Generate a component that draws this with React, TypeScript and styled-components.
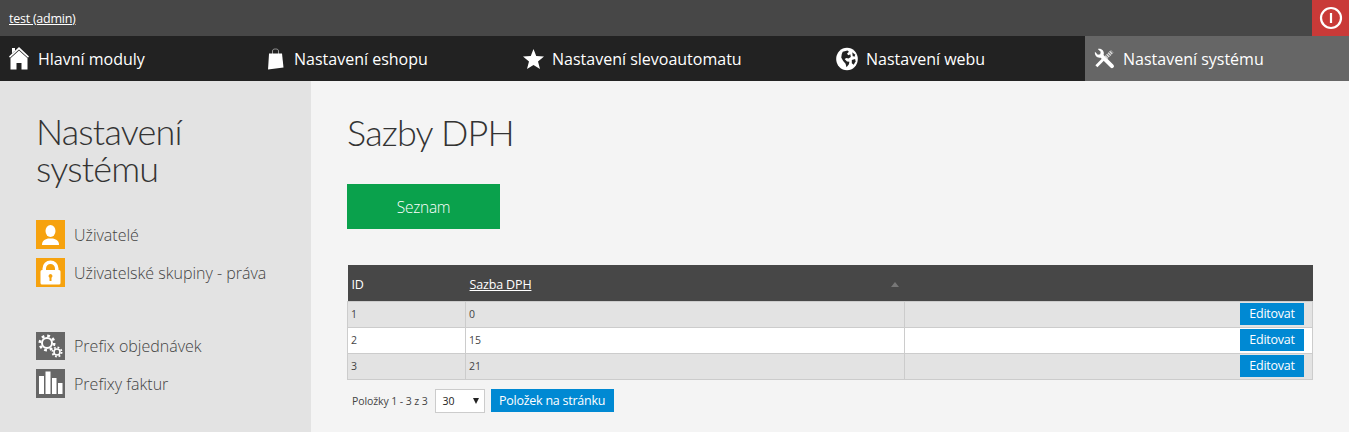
import styled, { createGlobalStyle } from 'styled-components';

const GlobalStyle = createGlobalStyle`
  html, body {
    margin: 0;
    padding: 0;
    background: #f4f4f4;
    font-family: "Open Sans", "Noto Sans", sans-serif;
    color: #444;
    overflow: hidden;
  }
  * { box-sizing: border-box; }
`;

const Page = styled.div`
  width: 1349px;
  height: 432px;
  display: flex;
  flex-direction: column;
`;

const TopBar = styled.header`
  height: 36px;
  flex-shrink: 0;
  background: #474747;
  display: flex;
  align-items: center;
  justify-content: space-between;
  padding-left: 9px;
`;

const UserLink = styled.a`
  color: #fff;
  font-size: 12.5px;
  letter-spacing: -0.25px;
  text-decoration: underline;
`;

const Logout = styled.a`
  width: 37px;
  height: 36px;
  background: #c93a38;
  display: flex;
  align-items: center;
  justify-content: center;
`;

const Nav = styled.nav`
  height: 45px;
  flex-shrink: 0;
  background: #222;
  display: grid;
  grid-template-columns: 258px 256px 313px 258px 264px;
`;

const NavItem = styled.a<{ $active?: boolean }>`
  display: flex;
  align-items: center;
  gap: 8px;
  padding-left: 9px;
  color: #fff;
  font-size: 16px;
  background: ${(p) => (p.$active ? '#666' : 'transparent')};
`;

const NavIcon = styled.span<{ $width?: number }>`
  width: ${(p) => p.$width ?? 21}px;
  height: 24px;
  display: flex;
  align-items: center;
`;

const Body = styled.div`
  flex: 1;
  min-height: 0;
  display: flex;
`;

const Sidebar = styled.aside`
  width: 311px;
  background: #e3e3e3;
  padding: 32px 0 0 36px;
`;

const SideTitle = styled.h2`
  margin: 0 0 33px;
  font-family: Lato, "Open Sans", sans-serif;
  font-size: 36px;
  line-height: 37px;
  font-weight: 300;
  letter-spacing: -0.8px;
  color: #333;
`;

const SideGroup = styled.div`
  display: flex;
  flex-direction: column;
  gap: 9px;
  margin-bottom: 45px;
`;

const SideLink = styled.a<{ $short?: boolean }>`
  display: flex;
  align-items: center;
  gap: 9px;
  height: ${(p) => (p.$short ? 28 : 29)}px;
  font-size: 16px;
  font-weight: 300;
  color: #444;
`;

const SideIcon = styled.span<{ $color: string }>`
  width: 29px;
  height: 100%;
  background: ${(p) => p.$color};
  display: flex;
`;

const Main = styled.main`
  flex: 1;
  padding: 27px 36px 0;
`;

const Title = styled.h1`
  margin: 0 0 27px;
  font-family: Lato, "Open Sans", sans-serif;
  font-size: 36px;
  line-height: 49px;
  font-weight: 300;
  letter-spacing: -0.8px;
  color: #333;
`;

const GreenButton = styled.a`
  width: 153px;
  height: 45px;
  background: #0aa14c;
  color: #fff;
  font-size: 15.5px;
  font-weight: 300;
  letter-spacing: -0.3px;
  display: flex;
  align-items: center;
  justify-content: center;
  margin-bottom: 36px;
`;

const Table = styled.table`
  width: 966px;
  border-collapse: collapse;
  table-layout: fixed;
  font-size: 10.5px;
`;

const HeadRow = styled.tr`
  height: 36px;
  background: #474747;
  color: #fff;
`;

const Th = styled.th<{ $width?: number }>`
  position: relative;
  width: ${(p) => (p.$width ? `${p.$width}px` : 'auto')};
  padding: 3px 4px 0;
  text-align: left;
  font-weight: 400;
  font-size: 12.5px;
  letter-spacing: -0.15px;
`;

const SortLink = styled.a`
  color: #fff;
  text-decoration: underline;
`;

const SortArrow = styled.span`
  position: absolute;
  right: 6px;
  top: 17px;
  border-left: 4px solid transparent;
  border-right: 4px solid transparent;
  border-bottom: 5px solid #777;
`;

const Row = styled.tr<{ $odd: boolean }>`
  height: 26px;
  background: ${(p) => (p.$odd ? '#e3e3e3' : '#fff')};
`;

const Td = styled.td<{ $right?: boolean }>`
  border: 1px solid #ccc;
  padding: 0 8px 0 3px;
  color: #444;
  text-align: ${(p) => (p.$right ? 'right' : 'left')};
  line-height: 0;
  & > span { line-height: 14px; }
`;

const BlueButton = styled.a`
  display: inline-flex;
  align-items: center;
  justify-content: center;
  height: 22px;
  padding-top: 1px;
  background: #0089d3;
  color: #fff;
  font-size: 12.5px;
  letter-spacing: -0.25px;
  line-height: 1;
`;

const EditButton = styled(BlueButton)`
  width: 64px;
  vertical-align: middle;
`;

const Pager = styled.div`
  display: flex;
  align-items: center;
  margin-top: 9px;
  padding-left: 5px;
  font-size: 10.5px;
  color: #444;
  letter-spacing: -0.1px;
`;

const PageSelect = styled.div`
  width: 50px;
  height: 24px;
  margin-left: 7px;
  padding: 0 5px 0 7px;
  background: #fff;
  border: 1px solid #ccc;
  display: flex;
  align-items: center;
  justify-content: space-between;
  font-size: 10.5px;
  color: #222;
`;

const SelectArrow = styled.span`
  border-left: 3.5px solid transparent;
  border-right: 3.5px solid transparent;
  border-top: 6px solid #222;
`;

const PerPageButton = styled(BlueButton)`
  width: 123px;
  height: 23px;
  margin-left: 6px;
`;

const HomeIcon = () => (
  <svg width="20" height="23" viewBox="0 0 20 23" fill="#fff">
    <path d="M0 9.500L10 0l10 9.500-1 1.200L10 2.600 1 10.700z" />
    <path d="M3 1h3v2.500l-3 3z" />
    <path d="M1.500 11.200L10 3.500l8.500 7.700V22.500h-6v-6.500h-5v6.500h-6z" />
  </svg>
);

const BagIcon = () => (
  <svg width="17" height="22" viewBox="0 0 17 22" fill="none">
    <path d="M5.500 6V3C5.500 1.500 6.500 1 8.500 1s3 .5 3 2V6" stroke="#999" strokeWidth="1" />
    <path d="M2 5.500h13l1.500 14L1 21.500z" fill="#fff" />
  </svg>
);

const StarIcon = () => (
  <svg width="21" height="20" viewBox="0 0 20 19">
    <path
      fill="#fff"
      d="M10 0l2.600 6.700 7.400.5-5.700 4.600 1.900 7.200L10 15.100 3.800 19l1.900-7.200L0 7.200l7.400-.5z"
    />
  </svg>
);

const GlobeIcon = () => (
  <svg width="23" height="24" viewBox="0 0 23 24">
    <ellipse cx="11.500" cy="12" rx="11.300" ry="11.800" fill="#fff" />
    <path
      fill="#222"
      d="M7 4.500l5-1.500 1.500 1.500-2 2 1.500 1.500 2-1 .5 3-2.500 1.500-2-.5-2 1 2.500 2.500 2.500.5-.5 2.500-2.500 3-1-3.500-2.500-3-2-3.500.5-3.500z"
    />
    <path fill="#222" d="M16.500 13l3.500-1 .5 2.500-2 3.500-2-1.500z" />
    <path fill="#222" d="M17 5l2.500 2 .5 2.500-2.500-.5z" />
  </svg>
);

const PowerIcon = () => (
  <svg width="24" height="24" viewBox="0 0 24 24" fill="none" stroke="#fff" strokeWidth="2.2">
    <circle cx="12" cy="12" r="10" />
    <path d="M12 7v10" />
  </svg>
);

const ToolsIcon = () => (
  <svg width="22" height="22" viewBox="0 0 22 22" fill="none">
    <path
      fill="#fff"
      d="M1 3.500l3 3 2.500-.5.5-2.500-3-3c3-.8 6.300 1.200 6.300 4.500 0 .6-.1 1.200-.3 1.700l10.300 10.300a2.100 2.100 0 0 1-3 3L6.900 9.600C3.700 10.500.2 7.500 1 3.500z"
    />
    <path stroke="#ddd" strokeWidth="4" strokeDasharray="1.500 .7" d="M12.500 9.500L19 3" />
    <path stroke="#fff" strokeWidth="3" d="M9.500 11.500L2.500 18.500" />
  </svg>
);

const UserIcon = () => (
  <svg width="29" height="29" viewBox="0 0 29 29" fill="#fff">
    <ellipse cx="14.500" cy="11" rx="5" ry="6" />
    <path d="M6 25c0-4 2-5.500 6-6.500h5c4 1 6 2.500 6 6.500z" />
  </svg>
);

const LockIcon = () => (
  <svg width="29" height="29" viewBox="0 0 29 29" fill="#fff">
    <path d="M14.500 2.500a8 8 0 0 0-8 8V12h3.500v-1.500a4.500 4.500 0 0 1 9 0V12H22.500v-1.500a8 8 0 0 0-8-8z" />
    <path
      fillRule="evenodd"
      d="M6 12h17a1.500 1.500 0 0 1 1.500 1.500V25a1.500 1.500 0 0 1-1.500 1.500H6A1.500 1.500 0 0 1 4.500 25V13.500A1.500 1.500 0 0 1 6 12zM14.500 16a2 2 0 0 0-1 3.700V23h2v-3.300a2 2 0 0 0-1-3.700z"
    />
  </svg>
);

const CogsIcon = () => (
  <svg width="29" height="28" viewBox="0 0 29 28" fill="none" stroke="#fff">
    <circle cx="11" cy="11" r="5" strokeWidth="2" />
    <circle cx="11" cy="11" r="7.200" strokeWidth="2.600" strokeDasharray="2.800 2.850" />
    <circle cx="21" cy="20" r="3" strokeWidth="1.600" />
    <circle cx="21" cy="20" r="4.600" strokeWidth="1.800" strokeDasharray="1.800 1.810" />
  </svg>
);

const BarsIcon = () => (
  <svg width="29" height="29" viewBox="0 0 29 29" fill="#fff">
    <path d="M3 7h5v18H3zM9.500 2.500h5V25h-5zM16 9h4.500v16H16zM22 14h4.500v11H22z" />
  </svg>
);

const rows = [
  { id: 1, rate: 0 },
  { id: 2, rate: 15 },
  { id: 3, rate: 21 },
];

export default function App() {
  return (
    <Page>
      <GlobalStyle />
      <TopBar>
        <UserLink>test (admin)</UserLink>
        <Logout>
          <PowerIcon />
        </Logout>
      </TopBar>
      <Nav>
        <NavItem>
          <NavIcon><HomeIcon /></NavIcon>
          Hlavní moduly
        </NavItem>
        <NavItem>
          <NavIcon $width={19}><BagIcon /></NavIcon>
          Nastavení eshopu
        </NavItem>
        <NavItem>
          <NavIcon><StarIcon /></NavIcon>
          Nastavení slevoautomatu
        </NavItem>
        <NavItem>
          <NavIcon $width={22}><GlobeIcon /></NavIcon>
          Nastavení webu
        </NavItem>
        <NavItem $active>
          <NavIcon><ToolsIcon /></NavIcon>
          Nastavení systému
        </NavItem>
      </Nav>
      <Body>
        <Sidebar>
          <SideTitle>
            Nastavení
            <br />
            systému
          </SideTitle>
          <SideGroup>
            <SideLink>
              <SideIcon $color="#f6a20e"><UserIcon /></SideIcon>
              Uživatelé
            </SideLink>
            <SideLink>
              <SideIcon $color="#f6a20e"><LockIcon /></SideIcon>
              Uživatelské skupiny - práva
            </SideLink>
          </SideGroup>
          <SideGroup>
            <SideLink $short>
              <SideIcon $color="#666"><CogsIcon /></SideIcon>
              Prefix objednávek
            </SideLink>
            <SideLink>
              <SideIcon $color="#666"><BarsIcon /></SideIcon>
              Prefixy faktur
            </SideLink>
          </SideGroup>
        </Sidebar>
        <Main>
          <Title>Sazby DPH</Title>
          <GreenButton>Seznam</GreenButton>
          <Table>
            <thead>
              <HeadRow>
                <Th $width={118}>ID</Th>
                <Th $width={439}>
                  <SortLink>Sazba DPH</SortLink>
                  <SortArrow />
                </Th>
                <Th />
              </HeadRow>
            </thead>
            <tbody>
              {rows.map((row) => (
                <Row key={row.id} $odd={row.id % 2 === 1}>
                  <Td><span>{row.id}</span></Td>
                  <Td><span>{row.rate}</span></Td>
                  <Td $right><EditButton>Editovat</EditButton></Td>
                </Row>
              ))}
            </tbody>
          </Table>
          <Pager>
            Položky 1 - 3 z 3
            <PageSelect>
              30
              <SelectArrow />
            </PageSelect>
            <PerPageButton>Položek na stránku</PerPageButton>
          </Pager>
        </Main>
      </Body>
    </Page>
  );
}
